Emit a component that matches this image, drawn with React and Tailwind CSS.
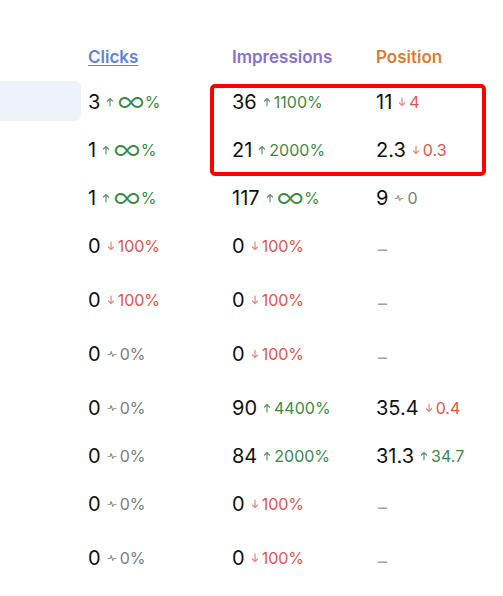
import { Fragment } from "react";

const rows = [
  { h: "h-[48px]", active: true, clicks: ["3", "up", "∞"], imp: ["36", "up", "1100%"], pos: ["11", "down", "4"] },
  { h: "h-[48px]", clicks: ["1", "up", "∞"], imp: ["21", "up", "2000%"], pos: ["2.3", "down", "0.3"] },
  { h: "h-[48px]", clicks: ["1", "up", "∞"], imp: ["117", "up", "∞"], pos: ["9", "flat", "0"] },
  { h: "h-[54px]", clicks: ["0", "down", "100%"], imp: ["0", "down", "100%"], pos: null },
  { h: "h-[54px]", clicks: ["0", "down", "100%"], imp: ["0", "down", "100%"], pos: null },
  { h: "h-[54px]", clicks: ["0", "flat", "0%"], imp: ["0", "down", "100%"], pos: null },
  { h: "h-[48px]", clicks: ["0", "flat", "0%"], imp: ["90", "up", "4400%"], pos: ["35.4", "down", "0.4"] },
  { h: "h-[48px]", clicks: ["0", "flat", "0%"], imp: ["84", "up", "2000%"], pos: ["31.3", "up", "34.7"] },
  { h: "h-[54px]", clicks: ["0", "flat", "0%"], imp: ["0", "down", "100%"], pos: null },
  { h: "h-[54px]", clicks: ["0", "flat", "0%"], imp: ["0", "down", "100%"], pos: null },
];

function Arrow({ dir }) {
  if (dir === "flat") {
    return (
      <svg width="10" height="10" viewBox="0 0 10 10" fill="none" stroke="currentColor" strokeWidth="1.2" strokeLinecap="round" strokeLinejoin="round" className="text-[#9a9a9a]">
        <path d="M1 5.5h2l1.2-3 1.6 5 1.2-2H9" />
      </svg>
    );
  }
  const up = dir === "up";
  return (
    <svg width="8" height="10" viewBox="0 0 8 10" fill="none" stroke="currentColor" strokeWidth="1.2" strokeLinecap="round" strokeLinejoin="round" className={up ? "text-[#5f9a67]" : "text-[#e9877f]"}>
      {up ? <path d="M4 9V1.5M1.5 4L4 1.5 6.5 4" /> : <path d="M4 1v7.5M1.5 6L4 8.5 6.5 6" />}
    </svg>
  );
}

function Cell({ data, suffix }) {
  if (!data) {
    return <span className="text-[18px] text-[#a3a3a3] leading-none">–</span>;
  }
  const [value, dir, delta] = data;
  const color = dir === "up" ? "text-[#3d8a47]" : dir === "down" ? "text-[#e0564c]" : "text-[#7c7c7c]";
  const inf = delta === "∞";
  return (
    <div className="flex items-center">
      <span className="text-[20px] text-[#111]">{value}</span>
      <span className="ml-[6px] mr-[3px] flex items-center">
        <Arrow dir={dir} />
      </span>
      <span className={`${color} text-[16px] flex items-center`}>
        {inf ? (
          <>
            <span className="font-light text-[30px] leading-none -mt-[2px]">∞</span>
            {suffix}
          </>
        ) : (
          delta
        )}
      </span>
    </div>
  );
}

export default function App() {
  return (
    <div className="relative w-[503px] h-[596px] bg-white overflow-hidden font-['Inter',sans-serif]">
      <div className="grid grid-cols-[88px_144px_144px_127px]">
        <div className="h-[78px]" />
        <div className="h-[78px] pt-[45px] text-[17px] font-semibold text-[#5b84e0] underline underline-offset-2">Clicks</div>
        <div className="h-[78px] pt-[45px] text-[17px] font-semibold text-[#8a70d4]">Impressions</div>
        <div className="h-[78px] pt-[45px] text-[17px] font-semibold text-[#e07b2e]">Position</div>
        {rows.map((r, i) => (
          <Fragment key={i}>
            <div className={`${r.h} pr-[7px] pt-[3px]`}>
              {r.active && <div className="h-[40px] rounded-r-[6px] bg-[#eef2fb]" />}
            </div>
            <div className={`${r.h} pt-[9px]`}>
              <Cell data={r.clicks} suffix="%" />
            </div>
            <div className={`${r.h} pt-[9px]`}>
              <Cell data={r.imp} suffix="%" />
            </div>
            <div className={`${r.h} pt-[9px]`}>
              {r.pos ? <Cell data={r.pos} /> : <div className="pt-[7px] pl-[2px]"><Cell data={null} /></div>}
            </div>
          </Fragment>
        ))}
      </div>
      <div className="absolute left-[210px] top-[84px] w-[276px] h-[92px] border-[4px] border-[#ff0000] rounded-[5px] pointer-events-none" />
    </div>
  );
}
